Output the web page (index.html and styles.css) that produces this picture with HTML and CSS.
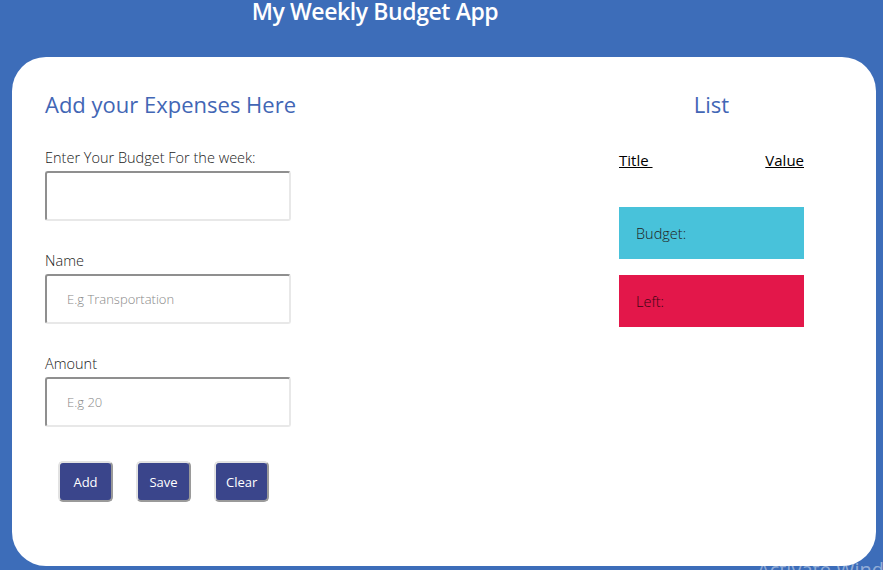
FILE: index.html
```html
<!DOCTYPE html>
<html>
<head>
<meta charset="utf-8">
<link rel="stylesheet" href="styles.css">
</head>
<body>
<header class="top">
  <h1 class="app-title">My Weekly Budget App</h1>
</header>
<main class="card">
  <section class="form-col">
    <h2 class="heading">Add your Expenses Here</h2>
    <div class="field">
      <label class="label">Enter Your Budget For the week:</label>
      <input class="input" type="text">
    </div>
    <div class="field">
      <label class="label">Name</label>
      <input class="input" type="text" placeholder="E.g Transportation">
    </div>
    <div class="field">
      <label class="label">Amount</label>
      <input class="input" type="text" placeholder="E.g 20">
    </div>
    <div class="buttons">
      <button class="btn">Add</button>
      <button class="btn">Save</button>
      <button class="btn">Clear</button>
    </div>
  </section>
  <section class="list-col">
    <h2 class="heading list-heading">List</h2>
    <div class="list-head">
      <span class="col-title">Title&nbsp;</span>
      <span class="col-title">Value</span>
    </div>
    <div class="row row-budget">Budget:</div>
    <div class="row row-left">Left:</div>
  </section>
</main>
<div class="watermark">Activate Windows</div>
</body>
</html>
```
FILE: styles.css
```css
html, body {
  margin: 0;
  padding: 0;
}
body {
  background: #3d6db9;
  width: 883px;
  height: 570px;
  overflow: hidden;
  position: relative;
  font-family: "Open Sans", sans-serif;
}
.top {
  height: 57px;
  width: 750px;
  text-align: center;
}
.app-title {
  margin: 0;
  color: #fff;
  font-family: "Open Sans", sans-serif;
  font-weight: 600;
  font-size: 23px;
  line-height: 22px;
  letter-spacing: -0.4px;
}
.card {
  background: #fff;
  margin-left: 12px;
  width: 864px;
  height: 509px;
  border-radius: 34px;
  box-sizing: border-box;
  padding: 33px 72px 0 33px;
  display: flex;
  justify-content: space-between;
}
.heading {
  margin: 0;
  font-family: "Open Sans", sans-serif;
  font-weight: 400;
  font-size: 22px;
  line-height: 28px;
  color: #4266b5;
}
.form-col {
  display: flex;
  flex-direction: column;
}
.heading + .field {
  margin-top: 31px;
}
.field {
  display: flex;
  flex-direction: column;
  margin-bottom: 31px;
}
.label {
  font-family: "Open Sans", sans-serif;
  font-size: 14.5px;
  line-height: 18px;
  color: #222;
  font-weight: 300;
}
.input {
  width: 246px;
  height: 50px;
  box-sizing: border-box;
  border-style: solid;
  border-width: 2px;
  border-color: #8f8f8f #e8e8e8 #e8e8e8 #8f8f8f;
  border-radius: 3px;
  padding: 0 0 0 20px;
  font-family: "Open Sans", sans-serif;
  font-size: 13px;
  font-weight: 300;
  color: #333;
  margin-top: 4px;
}
.input::placeholder {
  color: #888;
}
.buttons {
  display: flex;
  gap: 23px;
  padding-left: 13px;
  margin-top: 3px;
}
.btn {
  height: 41px;
  min-width: 55px;
  padding: 0 10px;
  background: #3a458b;
  color: #fff;
  font-family: "Open Sans", sans-serif;
  font-size: 13px;
  border-style: solid;
  border-width: 2px;
  border-color: #e2e2e2 #9a9a9a #9a9a9a #e2e2e2;
  border-radius: 5px;
}
.list-col {
  width: 185px;
  display: flex;
  flex-direction: column;
}
.list-heading {
  text-align: center;
}
.list-head {
  display: flex;
  justify-content: space-between;
  margin-top: 33px;
}
.col-title {
  font-family: "Open Sans", sans-serif;
  font-size: 15px;
  line-height: 18px;
  font-weight: 500;
  color: #000;
  text-decoration: underline;
}
.row {
  height: 52px;
  box-sizing: border-box;
  padding-left: 17px;
  display: flex;
  align-items: center;
  font-family: "Open Sans", sans-serif;
  font-weight: 300;
  font-size: 14.5px;
  color: #222;
  margin-bottom: 16px;
}
.row-budget {
  background: #48c2da;
  margin-top: 38px;
}
.row-left {
  background: #e3174a;
  color: #3a0512;
}
.watermark {
  position: absolute;
  left: 757px;
  top: 556px;
  font-family: "Open Sans", sans-serif;
  font-size: 20px;
  color: rgba(255,255,255,0.45);
  white-space: nowrap;
}
```
